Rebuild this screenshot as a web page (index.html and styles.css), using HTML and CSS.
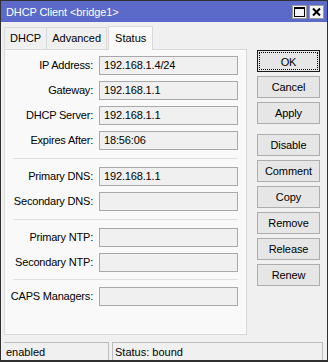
FILE: index.html
```html
<!DOCTYPE html>
<html lang="en">
    <head>
        <meta charset="utf-8">
        <title>DHCP Client</title>
        <link rel="stylesheet" href="styles.css">
    </head>
    <body>
    <div class="win">
        <div class="titlebar">
            <span class="title">DHCP Client &lt;bridge1&gt;</span>
            <span class="tbtn">
                <svg width="15" height="14" viewBox="0 0 15 14"><rect x="2.5" y="2.5" width="10" height="9" fill="none" stroke="#000" stroke-width="1"/><line x1="2.5" y1="3.5" x2="12.5" y2="3.5" stroke="#000" stroke-width="1"/></svg>
            </span>
            <span class="tbtn">
                <svg width="15" height="14" viewBox="0 0 15 14"><path d="M4 3.5 L11 10.5 M11 3.5 L4 10.5" stroke="#000" stroke-width="2"/></svg>
            </span>
        </div>
        <div class="middle">
            <div class="main">
                <ul class="tabs">
                    <li>DHCP</li>
                    <li>Advanced</li>
                    <li class="current">Status</li>
                </ul>
                <div class="panel">
                    <div class="group">
                        <label>IP Address:</label><div class="field">192.168.1.4/24</div>
                        <label>Gateway:</label><div class="field">192.168.1.1</div>
                        <label>DHCP Server:</label><div class="field">192.168.1.1</div>
                        <label>Expires After:</label><div class="field">18:56:06</div>
                    </div>
                    <div class="sep"></div>
                    <div class="group">
                        <label>Primary DNS:</label><div class="field">192.168.1.1</div>
                        <label>Secondary DNS:</label><div class="field"></div>
                    </div>
                    <div class="sep"></div>
                    <div class="group">
                        <label>Primary NTP:</label><div class="field"></div>
                        <label>Secondary NTP:</label><div class="field"></div>
                    </div>
                    <div class="sep last"></div>
                    <div class="group">
                        <label>CAPS Managers:</label><div class="field"></div>
                    </div>
                </div>
            </div>
            <div class="buttons">
                <div class="btn default"><span>OK</span></div>
                <div class="btn">Cancel</div>
                <div class="btn">Apply</div>
                <div class="btn gap">Disable</div>
                <div class="btn">Comment</div>
                <div class="btn">Copy</div>
                <div class="btn">Remove</div>
                <div class="btn">Release</div>
                <div class="btn">Renew</div>
            </div>
        </div>
        <div class="statusbar">
            <div class="cell first">enabled</div>
            <div class="cell">Status: bound</div>
        </div>
    </div>
    </body>
</html>
```

FILE: styles.css
```css
*{padding:0; margin:0; list-style:none; box-sizing:border-box;}
body{font-family:"Liberation Sans", Arial, sans-serif; font-size:11px; color:#000; background:#f0f0f0;}
.win{width:328px; height:362px; border:1px solid #303030; border-bottom-width:2px; background:#f0f0f0; display:flex; flex-direction:column;}

.titlebar{height:21px; background:#5b6ac8; display:flex; align-items:center; padding:0 3px 0 5px; gap:2px;}
.title{flex:1; color:#fff; font-size:11px; letter-spacing:-0.1px;}
.tbtn{width:15px; height:14px; background:#f4f4f4; border:1px solid #9a9a9a; display:flex;}
.tbtn svg{display:block; margin:-1px;}

.middle{display:flex; flex:1;}
.main{padding:2px 0 0 3px; width:246px;}

.tabs{display:flex; align-items:flex-end; height:25px; padding-top:1px;}
.tabs li{height:22px; line-height:21px; padding:0 5px; border:1px solid #d9d9d9; border-bottom:0; border-right:0; background:#f0f0f0;}
.tabs li:nth-child(2){border-right:1px solid #d9d9d9;}
.tabs li.current{height:24px; line-height:22px; margin-left:1px; padding:0 6px; background:#f9f9f9; border:1px solid #d9d9d9; border-bottom:0; position:relative; top:1px;}

.panel{height:286px; border:1px solid #d9d9d9; background:#f9f9f9; padding:6px 0 0 0;}
.group{display:grid; grid-template-columns:88px 139px; column-gap:6px; row-gap:6px;}
.group label{text-align:right; line-height:19px; white-space:nowrap; letter-spacing:-0.2px;}
.field{height:19px; border:1px solid #a9a9a9; background:#f0f0f0; line-height:17px; padding-left:4px; letter-spacing:-0.15px;}
.sep{height:1px; background:#e0e0e0; margin:8px 8px 8px 8px;}
.sep.last{margin:7px 8px 7px 8px;}

.buttons{padding:28px 0 0 10px; display:flex; flex-direction:column; gap:4px;}
.btn{width:63px; height:22px; border:1px solid #adadad; background:#e6e6e6; text-align:center; line-height:20px; letter-spacing:-0.1px;}
.btn.gap{margin-top:6px;}
.btn.default{border:1px solid #1a1a1a; padding:1px;}
.btn.default span{display:block; height:18px; line-height:18px; border:1px dotted #000;}

.statusbar{height:22px; display:flex; padding:4px 4px 0 3px; gap:3px;}
.cell{border:1px solid #bcbcbc; border-bottom:0; height:18px; line-height:18px; padding-left:2px; flex:1;}
.cell.first{flex:0 0 105px; border-left:0;}
```
